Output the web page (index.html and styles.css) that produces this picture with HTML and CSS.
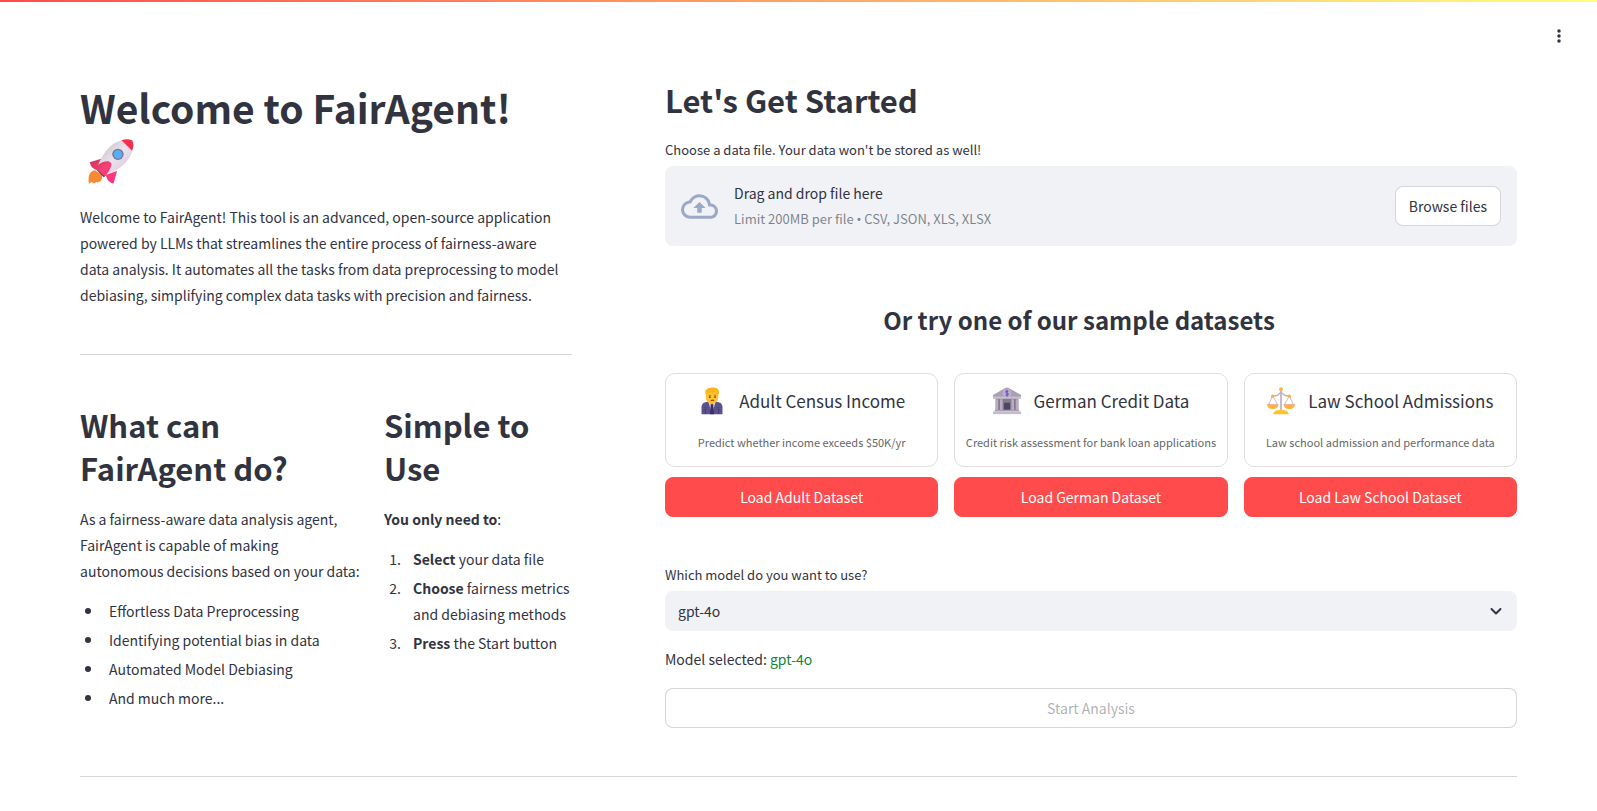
FILE: index.html
```html
<!DOCTYPE html>
<html lang="en">
<head>
    <meta charset="UTF-8">
    <meta name="viewport" content="width=device-width, initial-scale=1.0">
    <title>FairAgent</title>
    <link rel="stylesheet" href="styles.css">
</head>
<body>
    <header class="app-header">
        <button class="menu-button" type="button" aria-label="Main menu">
            <svg width="20" height="20" viewBox="0 0 24 24" fill="currentColor">
                <circle cx="12" cy="6" r="2.1"/>
                <circle cx="12" cy="12" r="2.1"/>
                <circle cx="12" cy="18" r="2.1"/>
            </svg>
        </button>
    </header>

    <main class="page">
        <div class="columns">
            <section class="intro">
                <h1>Welcome to FairAgent!
                    <svg class="rocket" viewBox="2 0 60 60" role="img" aria-label="rocket">
                        <defs>
                            <linearGradient id="hull" x1="0" y1="0" x2="1" y2="1">
                                <stop offset="0.2" stop-color="#cfcad0"/>
                                <stop offset="0.5" stop-color="#ebe3ee"/>
                                <stop offset="0.9" stop-color="#dcc3e0"/>
                            </linearGradient>
                            <linearGradient id="fin" x1="0" y1="0" x2="1" y2="1">
                                <stop offset="0" stop-color="#c9355f"/>
                                <stop offset="0.5" stop-color="#fb4070"/>
                                <stop offset="1" stop-color="#ff2f88"/>
                            </linearGradient>
                        </defs>
                        <path d="M15 41c-6 1-8 6-7 15 2 0 2-2 3-2 2 1 2 2 4 2 1-2 2-2 3-1 4-1 6-5 5-9z" fill="#f58a35"/>
                        <path d="M16 40l9 9 3-3-9-9z" fill="#433b6b"/>
                        <path d="M22 28L9 32c1 5 4 8 9 9zM40 42l-4 14c-5-1-7-4-9-10z" fill="url(#fin)"/>
                        <path d="M49 7c-13 0-23 10-31 29l10 10c18-7 28-18 30-30z" fill="url(#hull)"/>
                        <path d="M45 7c5-2 9-1 12 0 2 3 2 7 0 12z" fill="#f2304b"/>
                        <circle cx="41" cy="23" r="6.4" fill="#77758c"/>
                        <circle cx="41" cy="23" r="4.9" fill="#57aef5"/>
                        <path d="M15 38c5-5 10-8 16-7 3 1 3 4 2 6-2 5-4 8-7 11z" fill="url(#fin)"/>
                    </svg>
                </h1>
                <p>Welcome to FairAgent! This tool is an advanced, open-source application powered by LLMs that streamlines the entire process of fairness-aware data&nbsp;analysis. It automates all the tasks from data preprocessing to model debiasing, simplifying complex data tasks with precision and fairness.</p>

                <hr>

                <div class="intro-columns">
                    <div>
                        <h2>What can FairAgent do?</h2>
                        <p>As a fairness-aware data analysis agent, FairAgent is capable of making autonomous&nbsp;decisions based on your data:</p>
                        <ul>
                            <li>Effortless Data Preprocessing</li>
                            <li>Identifying potential bias in data</li>
                            <li>Automated Model Debiasing</li>
                            <li>And much more...</li>
                        </ul>
                    </div>
                    <div>
                        <h2>Simple to Use</h2>
                        <p><strong>You only need to</strong>:</p>
                        <ol>
                            <li><strong>Select</strong> your data file</li>
                            <li><strong>Choose</strong> fairness metrics and debiasing methods</li>
                            <li><strong>Press</strong> the Start button</li>
                        </ol>
                    </div>
                </div>
            </section>

            <section class="start">
                <h2>Let's Get Started</h2>

                <label class="field-label" for="dataFile">Choose a data file. Your data won't be stored as well!</label>
                <div class="dropzone">
                    <svg class="cloud" viewBox="0 0 24 24" fill="currentColor">
                        <path d="M19.35 10.04A7.49 7.49 0 0 0 12 4C9.11 4 6.6 5.64 5.35 8.04A5.994 5.994 0 0 0 0 14c0 3.31 2.69 6 6 6h13c2.76 0 5-2.24 5-5 0-2.64-2.05-4.78-4.65-4.96zM19 18H6c-2.21 0-4-1.79-4-4 0-2.05 1.53-3.76 3.56-3.97l1.07-.11.5-.95A5.469 5.469 0 0 1 12 6c2.62 0 4.88 1.86 5.39 4.43l.3 1.5 1.53.11A2.98 2.98 0 0 1 22 15c0 1.65-1.35 3-3 3zM8 13h2.55v3h2.9v-3H16l-4-4z"/>
                    </svg>
                    <div class="dropzone-text">
                        <span>Drag and drop file here</span>
                        <small>Limit 200MB per file <span class="dot">•</span> CSV, JSON, XLS, XLSX</small>
                    </div>
                    <input class="file-input" id="dataFile" type="file" accept=".csv,.json,.xls,.xlsx">
                    <button class="button" type="button" onclick="document.getElementById('dataFile').click()">Browse files</button>
                </div>

                <h3>Or try one of our sample datasets</h3>

                <div class="datasets">
                    <div class="dataset">
                        <div class="card">
                            <div class="card-title">
                                <svg class="emoji" viewBox="0 0 32 32">
                                    <path d="M4 31v-8c0-4 3-6 7-6h10c4 0 7 2 7 6v8z" fill="#59518d"/>
                                    <path d="M12 17l4 14 4-14z" fill="#e5dff0"/>
                                    <path d="M14.7 18h2.6l1 13h-4.6z" fill="#3b315f"/>
                                    <path d="M8.500 23v8M23.500 23v8" stroke="#443d70" stroke-width="1"/>
                                    <path d="M13 13h6v5l-3 2-3-2z" fill="#f0a51c"/>
                                    <path d="M9 8c0-4 3-6 7-6s7 2 7 6v4c0 4-3 7-7 7s-7-3-7-7z" fill="#ffc52e"/>
                                    <path d="M9 9c-2-5 1-8 5-8 5-1 10 0 10 5 0 2-1 3-1 4-1-3-2-4-4-4-3 1-7 0-8 1z" fill="#fcb61c"/>
                                    <path d="M12 9.500h3M18 9.500h3" stroke="#a85a19" stroke-width="0.8"/>
                                    <circle cx="13.500" cy="11.500" r="1" fill="#4d2b28"/>
                                    <circle cx="19.500" cy="11.500" r="1" fill="#4d2b28"/>
                                    <path d="M14.500 16q2-2 4 0" stroke="#a83d24" stroke-width="1.200" fill="none"/>
                                </svg>
                                <span>Adult Census Income</span>
                            </div>
                            <p>Predict whether income exceeds $50K/yr</p>
                        </div>
                        <button class="button primary" type="button">Load Adult Dataset</button>
                    </div>

                    <div class="dataset">
                        <div class="card">
                            <div class="card-title">
                                <svg class="emoji" viewBox="0 0 32 32">
                                    <path d="M3 13h26v14H3z" fill="#857a8e"/>
                                    <path d="M3 14h3v13H3zM8 14h3v13H8zM21 14h3v13h-3zM26 14h3v13h-3z" fill="#b8adc2"/>
                                    <path d="M12.500 18h7v9h-7z" fill="#50465e"/>
                                    <path d="M0 9L14 1q2-1 4 0l14 8v4H0z" fill="#aaa0b3"/>
                                    <path d="M0 11h32v2H0z" fill="#c9c1d0"/>
                                    <circle cx="16" cy="7" r="5" fill="#bcb2c7"/>
                                    <path d="M17.500 5c-3-1.500-4 1-1.500 2s1.500 3-1.500 2M16 3v8" stroke="#7953bf" stroke-width="1.300" fill="none"/>
                                    <path d="M2 26h28v2H2z" fill="#aaa0b5"/>
                                    <path d="M0 28h32v3H0z" fill="#c4bccb"/>
                                </svg>
                                <span>German Credit Data</span>
                            </div>
                            <p>Credit risk assessment for bank loan applications</p>
                        </div>
                        <button class="button primary" type="button">Load German Dataset</button>
                    </div>

                    <div class="dataset">
                        <div class="card">
                            <div class="card-title">
                                <svg class="emoji" viewBox="0 0 32 32">
                                    <path d="M16 4v23" stroke="#b9a5bf" stroke-width="1.800"/>
                                    <path d="M6 10h4c3 0 4-3 6-4 2 1 3 4 6 4h4" stroke="#c5afc9" stroke-width="1.500" fill="none"/>
                                    <path d="M6 11L2 20M7 11l5 9M25 11l-5 9M26 11l4 9" stroke="#bba7c2" stroke-width="0.900"/>
                                    <path d="M0 20h13c0 7-13 7-13 0zM19 20h13c0 7-13 7-13 0z" fill="#ffb43f"/>
                                    <path d="M0 20h13M19 20h13" stroke="#eea58b" stroke-width="0.900"/>
                                    <circle cx="6.500" cy="10.500" r="1.900" fill="#ffb22e"/>
                                    <circle cx="25.500" cy="10.500" r="1.900" fill="#ffb22e"/>
                                    <circle cx="16" cy="2.500" r="2.200" fill="#ffb33f"/>
                                    <path d="M7 31c1-4 5-5 9-5s8 1 9 5z" fill="#fbc32d"/>
                                </svg>
                                <span>Law School Admissions</span>
                            </div>
                            <p>Law school admission and performance data</p>
                        </div>
                        <button class="button primary" type="button">Load Law School Dataset</button>
                    </div>
                </div>

                <label class="field-label" for="model">Which model do you want to use?</label>
                <div class="select-wrap">
                    <select id="model">
                        <option selected>gpt-4o</option>
                    </select>
                    <svg class="chevron" viewBox="0 0 20 20" fill="none" stroke="currentColor" stroke-width="2" stroke-linecap="round" stroke-linejoin="round">
                        <path d="M5.500 8l4.500 4.500L14.500 8"/>
                    </svg>
                </div>

                <p class="selected-model">Model selected: <span>gpt-4o</span></p>
                <button class="button start-button" type="button" disabled>Start Analysis</button>
            </section>
        </div>

        <hr>
    </main>
</body>
</html>
```

FILE: styles.css
```css
:root {
    --text: #31333f;
    --muted: rgba(49, 51, 63, 0.6);
    --disabled: rgba(49, 51, 63, 0.4);
    --line: rgba(49, 51, 63, 0.2);
    --panel: #f0f2f6;
    --primary: #ff4b4b;
    --green: #158237;
}

* {
    box-sizing: border-box;
}

body {
    margin: 0;
    background: white;
    color: var(--text);
    font-family: "Source Sans Pro", "Noto Sans CJK SC", sans-serif;
    font-size: 14px;
    line-height: 26px;
}

h1, h2, h3, p, ul, ol {
    margin: 0;
}

h1 {
    padding-top: 3px;
    margin-bottom: 17px;
    font-size: 39px;
    font-weight: 700;
    line-height: 53px;
}

h2 {
    margin-bottom: 17px;
    font-size: 31px;
    font-weight: 600;
    line-height: 43px;
}

h3 {
    margin: 57px 24px 36px 0;
    font-size: 24px;
    font-weight: 600;
    line-height: 34px;
    text-align: center;
}

strong {
    font-weight: 600;
}

hr {
    height: 1px;
    margin: 48px 0;
    border: none;
    background: var(--line);
}

ul, ol {
    margin-top: 14px;
    padding: 0;
}

ol li {
    margin: 0 0 3px 20px;
    padding-left: 9px;
}

ul li {
    display: flex;
    align-items: center;
    gap: 18px;
    margin: 0 0 3px 5px;
}

ul li::before {
    content: "";
    width: 6px;
    height: 6px;
    border-radius: 50%;
    background: var(--text);
}

button, select {
    font: inherit;
    color: inherit;
}

.app-header {
    display: flex;
    justify-content: flex-end;
    padding: 22px 24px 28px;
    background: linear-gradient(90deg, #ff4b4b, #fffd80) top / 100% 2px no-repeat;
}

.menu-button {
    display: flex;
    padding: 4px;
    border: none;
    background: none;
    cursor: pointer;
}

.page {
    padding: 0 80px;
}

.columns {
    display: grid;
    grid-template-columns: 41fr 71fr;
    gap: 93px;
}

.intro hr {
    margin-top: 46px;
}

.intro-columns {
    display: grid;
    grid-template-columns: 72fr 47fr;
    gap: 16px;
}

.rocket {
    display: block;
    width: 60px;
    height: 53px;
}

.start h2 {
    margin-bottom: 18px;
}

.field-label {
    display: block;
    margin-bottom: 6px;
    font-size: 13px;
    line-height: 21px;
}

.dropzone {
    display: flex;
    align-items: center;
    padding: 14px 16px;
    border-radius: 8px;
    background: var(--panel);
}

.cloud {
    width: 37px;
    height: 37px;
    margin-right: 16px;
    color: #9ba9c8;
}

.dropzone-text {
    display: flex;
    flex: 1;
    flex-direction: column;
}

.dropzone-text small {
    font-size: 13px;
    line-height: 25px;
    color: var(--muted);
}

.dot {
    font-family: "Noto Sans", sans-serif;
}

.file-input {
    display: none;
}

.button {
    height: 40px;
    padding: 0 13px;
    border: 1px solid var(--line);
    border-radius: 8px;
    background: white;
    cursor: pointer;
}

.button.primary {
    border-color: var(--primary);
    background: var(--primary);
    color: white;
}

.button:disabled {
    color: var(--disabled);
    cursor: not-allowed;
}

.datasets {
    display: grid;
    grid-template-columns: repeat(3, 1fr);
    gap: 16px;
    margin-bottom: 47px;
}

.dataset {
    display: flex;
    flex-direction: column;
    gap: 10px;
}

.card {
    padding: 13px 0 14px;
    border: 1px solid #ddd;
    border-radius: 10px;
    text-align: center;
}

.card-title {
    display: flex;
    align-items: center;
    justify-content: center;
    gap: 13px;
    margin-bottom: 17px;
    font-size: 17px;
    line-height: 28px;
}

.emoji {
    width: 28px;
    height: 28px;
}

.card p {
    font-size: 11px;
    line-height: 20px;
    color: #666;
}

.select-wrap {
    position: relative;
}

.select-wrap select {
    display: block;
    width: 100%;
    height: 40px;
    padding: 0 13px;
    border: none;
    border-radius: 8px;
    background: var(--panel);
    appearance: none;
}

.chevron {
    position: absolute;
    top: 10px;
    right: 11px;
    width: 20px;
    height: 20px;
    pointer-events: none;
}

.selected-model {
    margin: 15px 0 16px;
}

.selected-model span {
    color: var(--green);
}

.start-button {
    display: block;
    width: 100%;
}
```
